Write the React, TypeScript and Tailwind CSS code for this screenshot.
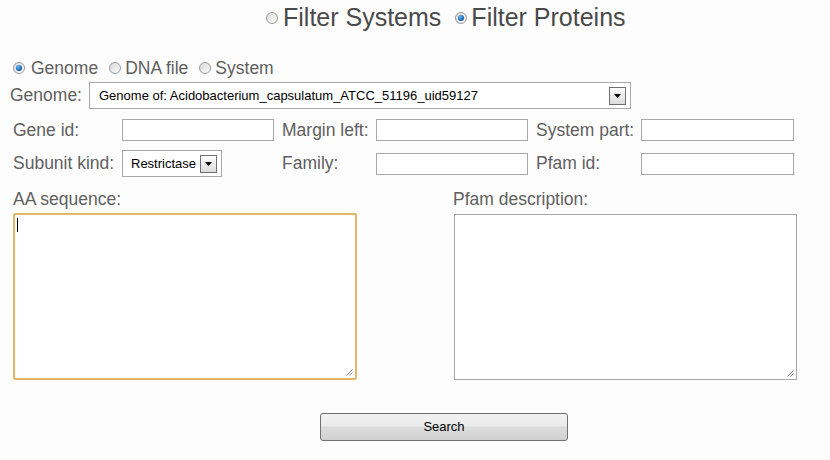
import React from "react"

function Radio({ checked = false }: { checked?: boolean }) {
  return (
    <span className="relative inline-flex items-center justify-center w-[12px] h-[12px] rounded-full border border-[#9a9a9a] bg-[linear-gradient(135deg,#d9d9d9,#fbfbfb)] shrink-0">
      {checked && (
        <span className="w-[6px] h-[6px] rounded-full bg-[radial-gradient(circle_at_40%_35%,#6cc0f5,#1560b0_60%,#0b3d78)]" />
      )}
    </span>
  )
}

function ArrowBox() {
  return (
    <span className="flex items-center justify-center w-[17px] h-[18px] border border-[#707070] bg-[linear-gradient(#fdfdfd,#dcdcdc)] shrink-0">
      <svg width="7" height="4" viewBox="0 0 7 4">
        <path d="M0 0h7L3.5 4z" fill="#000" />
      </svg>
    </span>
  )
}

function Input({ w }: { w: string }) {
  return <div className={`h-[22px] border border-[#a8a8a8] bg-white ${w}`} />
}

function Grip() {
  return (
    <svg className="absolute right-[2px] bottom-[2px]" width="8" height="8" viewBox="0 0 8 8">
      <path d="M7.5 1.5L1.5 7.5M7.5 4.5L4.5 7.5" stroke="#777" strokeWidth="1" />
    </svg>
  )
}

export default function App() {
  return (
    <div className="w-[830px] h-[460px] bg-[#fdfdfd] font-['Liberation_Sans',Arial,sans-serif] text-[#5f5f5f] overflow-hidden">

      {/* top filter switch */}
      <div className="flex items-center h-[29px] mt-[3px] pl-[266px] text-[25px] leading-[29px] text-[#4a4a4a]">
        <Radio />
        <span className="ml-[5px]">Filter Systems</span>
        <span className="ml-[14px]" />
        <Radio checked />
        <span className="ml-[4px]">Filter Proteins</span>
      </div>

      {/* source */}
      <div className="flex items-center h-[20px] mt-[26px] pl-[13px] text-[17.5px] leading-[20px]">
        <Radio checked />
        <span className="ml-[6px]">Genome</span>
        <span className="ml-[11px]" />
        <Radio />
        <span className="ml-[4px]">DNA file</span>
        <span className="ml-[11px]" />
        <Radio />
        <span className="ml-[4px]">System</span>
      </div>

      {/* genome select */}
      <div className="flex items-center h-[27px] mt-[4px] pl-[10px] text-[17.5px]">
        <span className="w-[79px]">Genome:</span>
        <div className="flex items-center justify-between w-[542px] h-[27px] border border-[#a8a8a8] bg-white pl-[9px] pr-[4px] text-[13px] text-black">
          <span>Genome of: Acidobacterium_capsulatum_ATCC_51196_uid59127</span>
          <ArrowBox />
        </div>
      </div>

      {/* fields row 1 */}
      <div className="flex items-center h-[22px] mt-[10px] pl-[13px] text-[17.5px]">
        <span className="w-[109px]">Gene id:</span>
        <Input w="w-[152px]" />
        <span className="w-[94px] ml-[8px]">Margin left:</span>
        <Input w="w-[152px]" />
        <span className="w-[105px] ml-[8px]">System part:</span>
        <Input w="w-[153px]" />
      </div>

      {/* fields row 2 */}
      <div className="flex items-center h-[27px] mt-[9px] pl-[13px] text-[17.5px]">
        <span className="w-[109px]">Subunit kind:</span>
        <div className="flex items-center w-[100px] h-[27px] border border-[#a8a8a8] bg-white pl-[8px] pr-[4px] text-[13px] text-black">
          <span className="flex-1">Restrictase</span>
          <ArrowBox />
        </div>
        <span className="w-[94px] ml-[60px]">Family:</span>
        <Input w="w-[152px]" />
        <span className="w-[105px] ml-[8px]">Pfam id:</span>
        <Input w="w-[153px]" />
      </div>

      {/* text areas */}
      <div className="flex mt-[12px] text-[17.5px] leading-[20px]">
        <div className="flex flex-col pl-[13px] w-[357px]">
          <span>AA sequence:</span>
          <div className="relative mt-[4px] h-[167px] border-2 border-[#e6b566] rounded-[2px] bg-white">
            <span className="absolute left-[2px] top-[3px] w-[1px] h-[14px] bg-black" />
            <Grip />
          </div>
        </div>
        <div className="flex flex-col ml-[96px] w-[344px]">
          <span>Pfam description:</span>
          <div className="relative mt-[5px] ml-[1px] h-[166px] border border-[#a8a8a8] bg-white">
            <Grip />
          </div>
        </div>
      </div>

      {/* search */}
      <div className="flex mt-[33px] pl-[320px]">
        <button className="w-[248px] h-[28px] rounded-[3px] border border-[#707070] bg-[linear-gradient(#f2f2f2_0%,#ebebeb_45%,#dddddd_50%,#d0d0d0_100%)] text-[13px] text-black">
          Search
        </button>
      </div>
    </div>
  )
}
